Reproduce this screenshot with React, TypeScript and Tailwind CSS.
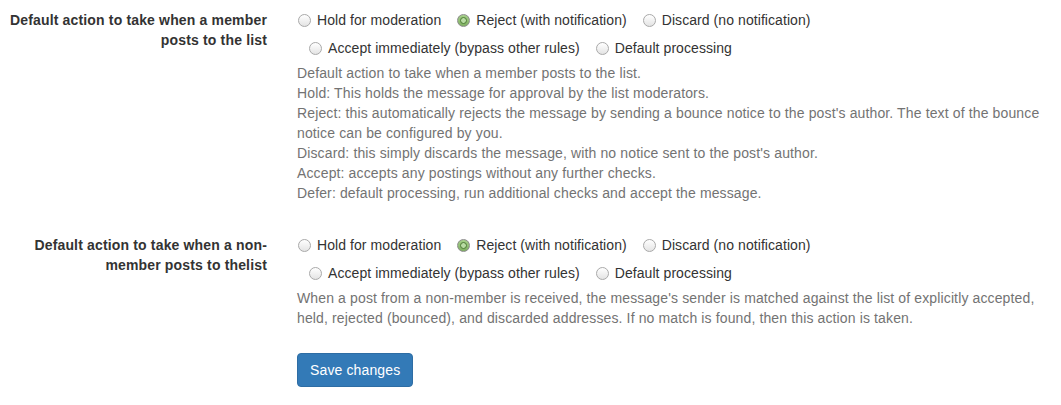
import React from "react";

type Opt = { label: string; checked?: boolean };

const options: Opt[] = [
  { label: "Hold for moderation" },
  { label: "Reject (with notification)", checked: true },
  { label: "Discard (no notification)" },
  { label: "Accept immediately (bypass other rules)" },
  { label: "Default processing" },
];

function RadioDot({ checked }: { checked?: boolean }) {
  if (checked)
    return (
      <span className="flex h-[13px] w-[13px] shrink-0 items-center justify-center rounded-full border border-[#8c8c8c] bg-gradient-to-b from-[#a6d08a] to-[#7fb062]">
        <span className="h-[7px] w-[7px] rounded-full border-[1.5px] border-[#4b7a33] bg-[#b9dca4]" />
      </span>
    );
  return (
    <span className="h-[13px] w-[13px] shrink-0 rounded-full border border-[#a9a9a9] bg-gradient-to-b from-white to-[#e4e4e4]" />
  );
}

function RadioGroup({ name }: { name: string }) {
  return (
    <div className="flex flex-wrap gap-x-[4px] gap-y-[8px] pt-[10px]" data-name={name}>
      {options.map((o, i) => (
        <label
          key={o.label}
          className={
            "flex h-[20px] items-center pl-[1px] leading-5 tracking-[0.07px] text-[#333] " +
            (i === 0 ? "" : "ml-[11px]")
          }
        >
          <RadioDot checked={o.checked} />
          <span className="ml-[6px] whitespace-nowrap">{o.label}</span>
        </label>
      ))}
    </div>
  );
}

function FieldRow({
  label,
  children,
}: {
  label: string;
  children: React.ReactNode;
}) {
  return (
    <div className="flex">
      <div className="w-[282px] shrink-0 pl-[5px] pr-[15px] pt-[10px] text-right font-bold leading-5 tracking-[0.16px] text-[#333]">
        {label}
      </div>
      <div className="min-w-0 flex-1 px-[15px]">{children}</div>
    </div>
  );
}

export default function App() {
  return (
    <div className="h-[405px] w-[1061px] bg-white font-['Liberation_Sans',Arial,sans-serif] text-[14px] leading-5 tracking-[0.13px]">
      <FieldRow label="Default action to take when a member posts to the list">
        <RadioGroup name="member" />
        <div className="mt-[5px] text-[#737373]">
          <div>Default action to take when a member posts to the list.</div>
          <div>Hold: This holds the message for approval by the list moderators.</div>
          <div>
            Reject: this automatically rejects the message by sending a bounce notice to the
            post's author. The text of the bounce notice can be configured by you.
          </div>
          <div>Discard: this simply discards the message, with no notice sent to the post's author.</div>
          <div>Accept: accepts any postings without any further checks.</div>
          <div>Defer: default processing, run additional checks and accept the message.</div>
        </div>
      </FieldRow>
      <div className="h-[22px]" />
      <FieldRow label="Default action to take when a non-member posts to thelist">
        <RadioGroup name="nonmember" />
        <div className="mt-[5px] text-[#737373]">
          When a post from a non-member is received, the message's sender is matched against the
          list of explicitly accepted, held, rejected (bounced), and discarded addresses. If no
          match is found, then this action is taken.
        </div>
        <button className="mt-[25px] h-[34px] rounded-[4px] border border-[#2e6da4] bg-[#337ab7] px-[12px] text-white">
          Save changes
        </button>
      </FieldRow>
    </div>
  );
}
